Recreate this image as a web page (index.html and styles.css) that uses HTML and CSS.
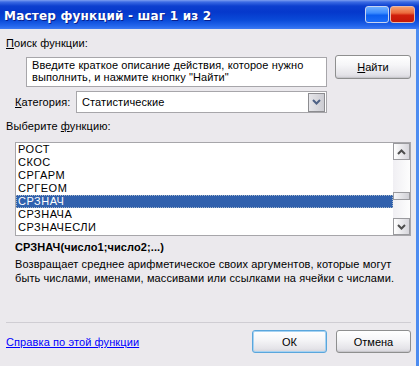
FILE: index.html
```html
<!DOCTYPE html>
<html lang="ru">
<head>
    <meta charset="UTF-8">
    <title>Мастер функций - шаг 1 из 2</title>
    <link rel="stylesheet" href="styles.css">
</head>
<body>
    <div class="window">
        <!-- Title bar -->
        <div class="titlebar">
            <span class="title-text">Мастер функций - шаг 1 из 2</span>
            <div class="title-buttons">
                <span class="tb-btn tb-help"></span>
                <span class="tb-btn tb-close"></span>
            </div>
        </div>

        <div class="dialog">
            <div class="label"><u>П</u>оиск функции:</div>
            <div class="search-row">
                <div class="search-box">Введите краткое описание действия, которое нужно выполнить, и нажмите кнопку "Найти"</div>
                <button class="btn find-btn"><u>Н</u>айти</button>
            </div>

            <div class="category-row">
                <span class="category-label"><u>К</u>атегория:</span>
                <div class="select">
                    <span class="select-value">Статистические</span>
                    <span class="arrow-btn">
                        <svg width="9" height="6" viewBox="0 0 9 6"><path d="M1 1 L4.5 4.5 L8 1" fill="none" stroke="#4d6185" stroke-width="2"/></svg>
                    </span>
                </div>
            </div>

            <div class="label list-label">Выберите <u>ф</u>ункцию:</div>
            <div class="listbox">
                <ul class="list-items">
                    <li>РОСТ</li>
                    <li>СКОС</li>
                    <li>СРГАРМ</li>
                    <li>СРГЕОМ</li>
                    <li class="selected">СРЗНАЧ</li>
                    <li>СРЗНАЧА</li>
                    <li>СРЗНАЧЕСЛИ</li>
                </ul>
                <div class="scrollbar">
                    <span class="sb-btn">
                        <svg width="9" height="6" viewBox="0 0 9 6"><path d="M1 5 L4.5 1.5 L8 5" fill="none" stroke="#4d4d4d" stroke-width="2"/></svg>
                    </span>
                    <div class="sb-track">
                        <span class="sb-thumb"></span>
                    </div>
                    <span class="sb-btn">
                        <svg width="9" height="6" viewBox="0 0 9 6"><path d="M1 1 L4.5 4.5 L8 1" fill="none" stroke="#4d4d4d" stroke-width="2"/></svg>
                    </span>
                </div>
            </div>

            <div class="signature">СРЗНАЧ(число1;число2;...)</div>
            <p class="description">Возвращает среднее арифметическое своих аргументов, которые могут быть числами, именами, массивами или ссылками на ячейки с числами.</p>

            <div class="separator"></div>

            <div class="footer">
                <a href="#" class="help-link">Справка по этой функции</a>
                <div class="footer-buttons">
                    <button class="btn ok-btn">ОК</button>
                    <button class="btn">Отмена</button>
                </div>
            </div>
        </div>
    </div>
</body>
</html>
```

FILE: styles.css
```css
/* Base */
* {
    box-sizing: border-box;
    margin: 0;
    padding: 0;
}

body {
    font-family: 'Liberation Sans', Arial, sans-serif;
    font-size: 11px;
    line-height: 13px;
    letter-spacing: 0.1px;
    color: #000000;
    background: #ebe9ed;
}

.window {
    width: 419px;
    height: 366px;
    display: flex;
    flex-direction: column;
    overflow: hidden;
}

/* Title bar */
.titlebar {
    height: 29px;
    flex-shrink: 0;
    display: flex;
    justify-content: space-between;
    align-items: flex-start;
    padding: 0 4px 0 4px;
    background: linear-gradient(to bottom, #7d9ff0 0px, #3b6be4 2px, #0c3fcf 6px, #0538cc 12px, #0a4ad8 20px, #2466ec 26px, #3e7af2 29px);
}

.title-text {
    margin-top: 10px;
    color: #ffffff;
    font-family: 'DejaVu Sans', sans-serif;
    font-weight: bold;
    font-size: 12px;
    letter-spacing: 0.2px;
    text-shadow: 1px 1px 0 #0a1e8c;
}

.title-buttons {
    display: flex;
    gap: 1px;
    margin-top: 6px;
}

.tb-btn {
    display: block;
    width: 25px;
    height: 17px;
    border: 1px solid #c8d4f0;
    border-radius: 3px;
}

.tb-help {
    width: 24px;
    background: linear-gradient(to bottom, #6fb0ff 0%, #3c8cff 40%, #0a5ef0 55%, #1c6cf8 100%);
}

.tb-close {
    border-color: #e8b8a8;
    background: linear-gradient(to bottom, #f4a070 0%, #ec6a3c 40%, #d0200c 55%, #c41808 100%);
}

/* Dialog body */
.dialog {
    flex: 1;
    display: flex;
    flex-direction: column;
    padding: 8px 5px 0 5px;
    border-right: 3px solid #4d8cf0;
}

.label {
    padding-left: 1px;
}

.search-row {
    display: flex;
    align-items: flex-start;
    margin-top: 5px;
}

.search-box {
    margin-top: 2px;
    margin-left: 21px;
    width: 301px;
    height: 30px;
    padding: 1px 5px;
    background: #ffffff;
    border: 1px solid #a7a6aa;
    line-height: 12px;
}

.btn {
    font-family: 'Liberation Sans', Arial, sans-serif;
    font-size: 11px;
    color: #000000;
    width: 75px;
    height: 23px;
    border: 1px solid #8e8f8f;
    border-radius: 3px;
    background: linear-gradient(to bottom, #ffffff 0%, #f6f6f8 40%, #e4e3e8 85%, #d3d2d8 100%);
    box-shadow: inset 0 -1px 0 #c8c7cc;
}

.find-btn {
    margin-left: auto;
    width: 76px;
    height: 24px;
}

.category-row {
    display: flex;
    align-items: center;
    margin-top: 4px;
    padding-left: 10px;
}

.category-label {
    width: 61px;
}

.select {
    width: 251px;
    height: 22px;
    display: flex;
    align-items: center;
    justify-content: space-between;
    background: #ffffff;
    border: 1px solid #a7a6aa;
    padding: 0 1px 0 5px;
}

.arrow-btn {
    width: 17px;
    height: 19px;
    display: flex;
    align-items: center;
    justify-content: center;
    border: 1px solid #8c8c90;
    background: linear-gradient(to right, #e6e6ea, #ccccd2);
}

.list-label {
    margin-top: 7px;
}

/* Function list */
.listbox {
    margin-top: 9px;
    margin-left: 10px;
    width: 396px;
    height: 94px;
    display: flex;
    background: #ffffff;
    border: 1px solid #a7a6aa;
}

.list-items {
    list-style: none;
    flex: 1;
}

.list-items li {
    height: 13px;
    line-height: 13px;
    padding-left: 2px;
    letter-spacing: 0.5px;
}

.list-items li.selected {
    background: #3161ad;
    color: #ffffff;
    outline: 1px dotted #a8b8c8;
    outline-offset: -1px;
}

.scrollbar {
    width: 17px;
    display: flex;
    flex-direction: column;
    background: linear-gradient(to right, #f0eff3, #fdfdfd);
}

.sb-btn {
    height: 17px;
    display: flex;
    align-items: center;
    justify-content: center;
    border: 1px solid #9a9a9e;
    background: linear-gradient(to right, #ffffff, #d6d5db);
}

.sb-track {
    flex: 1;
    position: relative;
}

.sb-thumb {
    position: absolute;
    left: 0;
    right: 0;
    top: 32px;
    height: 8px;
    border: 1px solid #9a9a9e;
    background: linear-gradient(to right, #f6f6f8, #d0d0d6);
}

.signature {
    margin-top: 5px;
    padding-left: 10px;
    font-weight: bold;
}

.description {
    margin-top: 3px;
    padding-left: 10px;
    line-height: 14px;
}

.separator {
    margin-top: auto;
    margin-left: 1px;
    height: 1px;
    background: #cfcdd3;
}

.footer {
    height: 43px;
    display: flex;
    align-items: center;
    justify-content: space-between;
    padding-left: 1px;
    padding-bottom: 8px;
    margin-top: 0;
}

.help-link {
    color: #0000ff;
    margin-top: 4px;
}

.footer-buttons {
    display: flex;
    gap: 9px;
    padding-top: 2px;
}

.ok-btn {
    border-color: #5aa6dc;
    box-shadow: inset 0 0 0 1px #a6d2f2, inset 0 -1px 0 #c8c7cc;
}
```
